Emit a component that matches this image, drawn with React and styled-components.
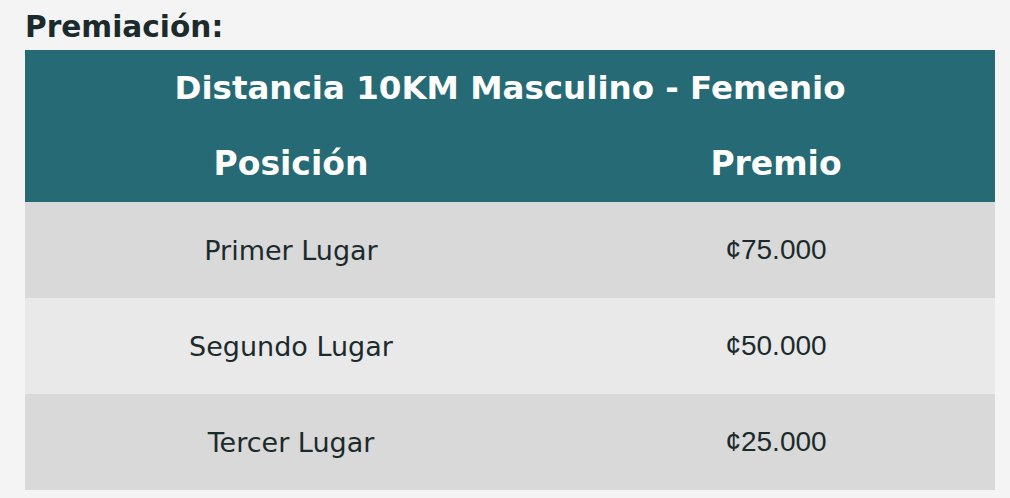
import React from 'react';
import styled, { createGlobalStyle } from 'styled-components';

const GlobalStyle = createGlobalStyle`
  html, body {
    margin: 0;
    padding: 0;
    background: #f4f4f4;
  }
  body {
    font-family: "DejaVu Sans", "Open Sans", sans-serif;
    color: #1b2b2c;
  }
`;

const Page = styled.div`
  width: 1010px;
  height: 498px;
  box-sizing: border-box;
  padding: 8px 15px 8px 25px;
  background: #f4f4f4;
`;

const Heading = styled.h2`
  margin: 0;
  height: 42px;
  font-size: 29.6px;
  line-height: 38px;
  font-weight: 700;
  color: #1b2b2c;
`;

const Table = styled.div`
  width: 970px;
  display: grid;
  grid-template-columns: 532px 438px;
`;

const HeaderCaption = styled.div`
  grid-column: 1 / -1;
  height: 82px;
  padding-bottom: 6px;
  box-sizing: border-box;
  display: flex;
  align-items: center;
  justify-content: center;
  background: #256a75;
  color: #fff;
  font-size: 32.5px;
  font-weight: 700;
`;

const HeadCell = styled.div`
  height: 70px;
  display: flex;
  align-items: center;
  justify-content: center;
  padding-bottom: 8px;
  box-sizing: border-box;
  background: #256a75;
  color: #fff;
  font-size: 33px;
  font-weight: 700;
`;

const Cell = styled.div`
  height: 96px;
  display: flex;
  align-items: center;
  justify-content: center;
  background: ${({ $odd }) => ($odd ? '#d9d9d9' : '#e9e9e9')};
  color: #1b2b2c;
  font-family: ${({ $money }) => ($money ? '"Liberation Sans", Arial, sans-serif' : 'inherit')};
  font-size: ${({ $money }) => ($money ? '28px' : '27px')};
`;

const prizes = [
  { place: 'Primer Lugar', amount: '¢75.000' },
  { place: 'Segundo Lugar', amount: '¢50.000' },
  { place: 'Tercer Lugar', amount: '¢25.000' },
];

const App = () => (
  <>
    <GlobalStyle />
    <Page>
      <Heading>Premiación:</Heading>
      <Table>
        <HeaderCaption>Distancia 10KM Masculino - Femenio</HeaderCaption>
        <HeadCell>Posición</HeadCell>
        <HeadCell>Premio</HeadCell>
        {prizes.map((p, i) => (
          <React.Fragment key={p.place}>
            <Cell $odd={i % 2 === 0}>{p.place}</Cell>
            <Cell $odd={i % 2 === 0} $money>{p.amount}</Cell>
          </React.Fragment>
        ))}
      </Table>
    </Page>
  </>
);

export default App;
